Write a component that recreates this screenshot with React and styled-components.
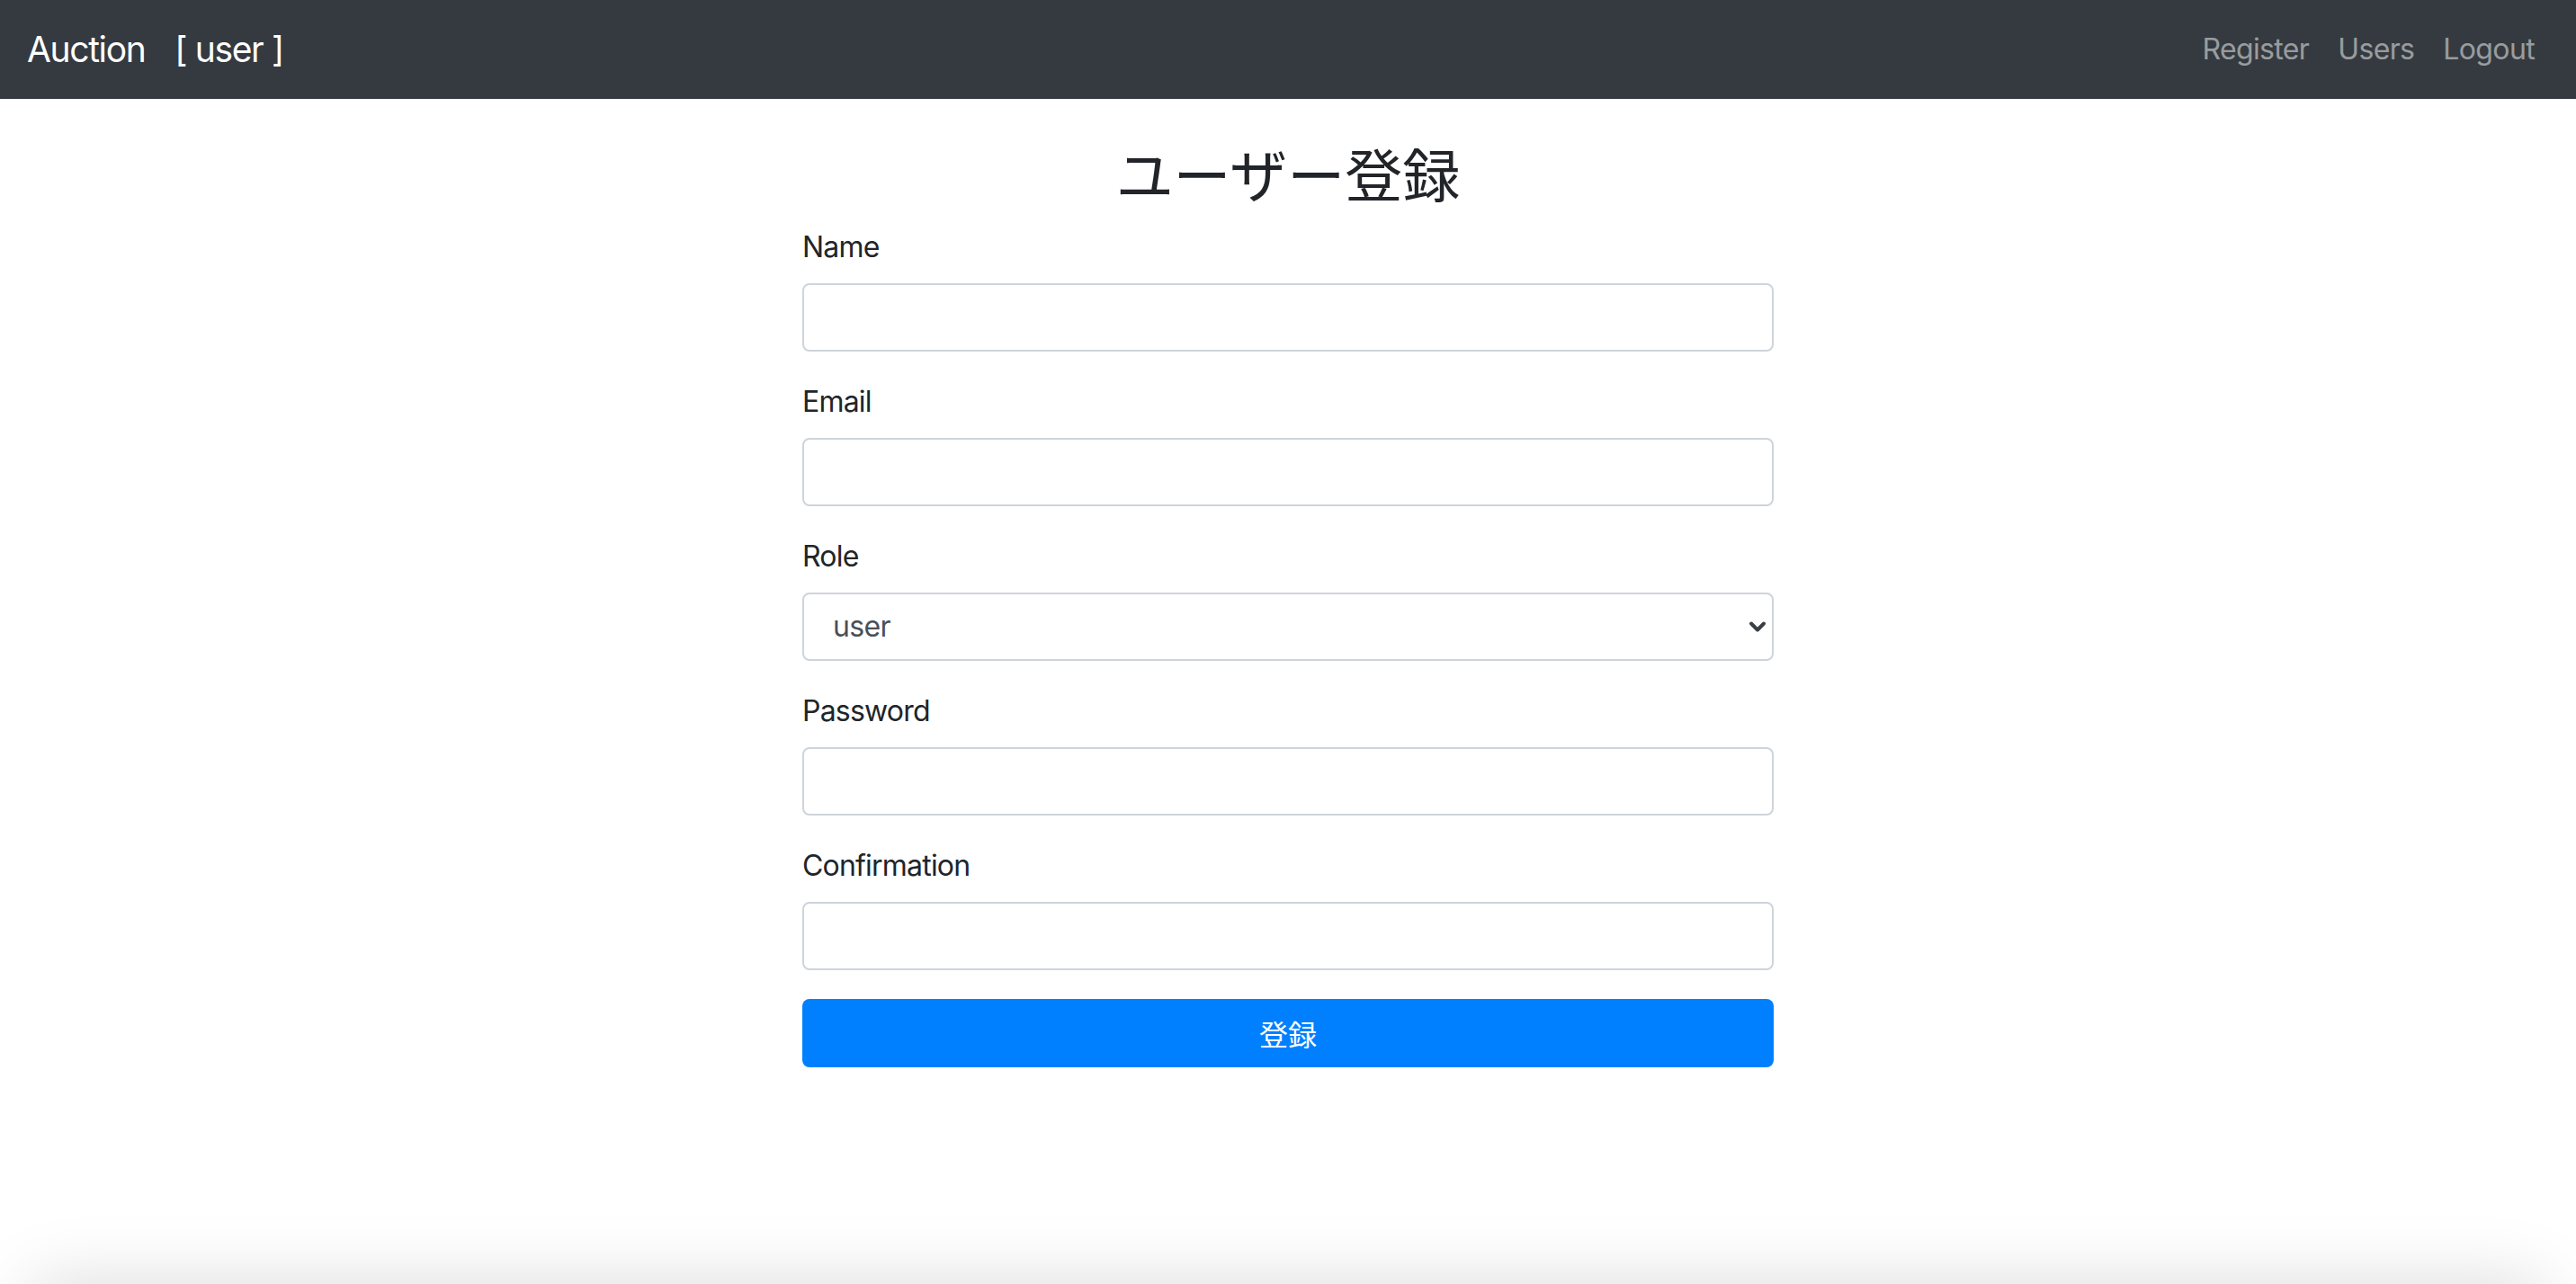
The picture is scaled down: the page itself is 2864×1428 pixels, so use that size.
import React from 'react';
import styled, { createGlobalStyle } from 'styled-components';

const GlobalStyle = createGlobalStyle`
  html, body {
    margin: 0;
    padding: 0;
    background: #fff;
  }

  body {
    font-family: Inter, "Noto Sans CJK JP", "Noto Sans", sans-serif;
    color: #212529;
  }

  * {
    box-sizing: border-box;
  }
`;

const Navbar = styled.nav`
  display: flex;
  align-items: center;
  justify-content: space-between;
  height: 110px;
  padding: 0 30px;
  background: #343a40;
`;

const Brand = styled.div`
  display: flex;
  align-items: center;
  gap: 33px;
  font-size: 39px;
  line-height: 60px;
  letter-spacing: -0.035em;
  color: #fff;
`;

const NavList = styled.ul`
  display: flex;
  margin: 0;
  padding: 0;
  list-style: none;
`;

const NavLink = styled.a`
  display: block;
  padding: 0 16px;
  font-size: 32px;
  line-height: 48px;
  letter-spacing: -0.02em;
  color: rgba(255, 255, 255, 0.5);
  text-decoration: none;
`;

const Container = styled.main`
  width: 1080px;
  margin: 0 auto;
  padding-top: 48px;
`;

const Title = styled.h2`
  margin: 0 0 16px;
  font-size: 64px;
  font-weight: 400;
  line-height: 1.2;
  text-align: center;
`;

const FormGroup = styled.div`
  margin-bottom: 32px;
`;

const Label = styled.label`
  display: block;
  margin-bottom: 16px;
  font-size: 32px;
  line-height: 48px;
  letter-spacing: -0.025em;
`;

const Input = styled.input`
  display: block;
  width: 100%;
  height: 76px;
  padding: 0 24px;
  font-family: inherit;
  font-size: 32px;
  color: #495057;
  background: #fff;
  border: 2px solid #ced4da;
  border-radius: 8px;
  outline: none;
`;

const SelectWrap = styled.div`
  position: relative;
`;

const Select = styled.select`
  display: block;
  width: 100%;
  height: 76px;
  padding: 0 32px;
  font-family: inherit;
  font-size: 32px;
  letter-spacing: -0.02em;
  color: #495057;
  background: #fff;
  border: 2px solid #ced4da;
  border-radius: 8px;
  outline: none;
  appearance: none;
  -webkit-appearance: none;
`;

const Chevron = styled.svg`
  position: absolute;
  right: 8px;
  top: 50%;
  width: 20px;
  height: 14px;
  margin-top: -7px;
  pointer-events: none;
`;

const SubmitButton = styled.button`
  display: block;
  width: 100%;
  height: 76px;
  font-family: inherit;
  font-size: 32px;
  color: #fff;
  background: #0080ff;
  border: none;
  border-radius: 8px;
  cursor: pointer;
`;

const BottomShade = styled.div`
  position: fixed;
  left: 36px;
  right: 36px;
  top: 100%;
  height: 100px;
  box-shadow: 0 0 80px rgba(0, 0, 0, 0.15);
  pointer-events: none;
`;

const fields = [
  { name: 'name', label: 'Name', type: 'text' },
  { name: 'email', label: 'Email', type: 'email' },
  { name: 'role', label: 'Role', select: ['user', 'admin'] },
  { name: 'password', label: 'Password', type: 'password' },
  { name: 'confirmation', label: 'Confirmation', type: 'password' },
];

export default function App() {
  return (
    <>
      <GlobalStyle />
      <Navbar>
        <Brand>
          <span>Auction</span>
          <span>[ user ]</span>
        </Brand>
        <NavList>
          <li>
            <NavLink href="#">Register</NavLink>
          </li>
          <li>
            <NavLink href="#">Users</NavLink>
          </li>
          <li>
            <NavLink href="#">Logout</NavLink>
          </li>
        </NavList>
      </Navbar>
      <Container>
        <Title>ユーザー登録</Title>
        <form onSubmit={(e) => e.preventDefault()}>
          {fields.map((f) => (
            <FormGroup key={f.name}>
              <Label htmlFor={f.name}>{f.label}</Label>
              {f.select ? (
                <SelectWrap>
                  <Select id={f.name} defaultValue={f.select[0]}>
                    {f.select.map((o) => (
                      <option key={o} value={o}>
                        {o}
                      </option>
                    ))}
                  </Select>
                  <Chevron viewBox="0 0 20 14">
                    <path
                      d="M3 3.5 L10 10.5 L17 3.5"
                      fill="none"
                      stroke="#3a3f44"
                      strokeWidth="4"
                      strokeLinecap="round"
                      strokeLinejoin="round"
                    />
                  </Chevron>
                </SelectWrap>
              ) : (
                <Input id={f.name} type={f.type} />
              )}
            </FormGroup>
          ))}
          <SubmitButton type="submit">登録</SubmitButton>
        </form>
      </Container>
      <BottomShade />
    </>
  );
}
